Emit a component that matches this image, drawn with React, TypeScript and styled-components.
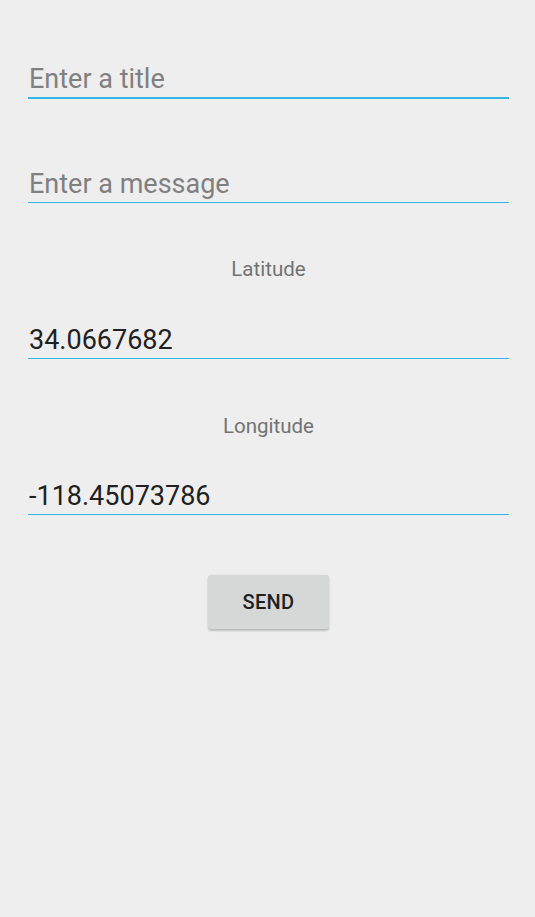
import React from "react";
import styled, { createGlobalStyle } from "styled-components";

const GlobalStyle = createGlobalStyle`
  html, body {
    margin: 0;
    padding: 0;
    background: #eeeeee;
  }
  #root {
    min-height: 100vh;
  }
`;

const Screen = styled.div`
  min-height: 100vh;
  background: #eeeeee;
  box-sizing: border-box;
  padding: 0 26px 0 28px;
  font-family: Roboto, "Liberation Sans", sans-serif;
`;

const Form = styled.form`
  display: flex;
  flex-direction: column;
  width: 481px;
  padding-top: 63px;
`;

const TextField = styled.input<{ $gap: number; $focused?: boolean }>`
  display: block;
  box-sizing: content-box;
  height: 30px;
  margin: ${(p) => p.$gap}px 0 0;
  padding: 1px 0 3px 1px;
  width: 480px;
  border: none;
  border-bottom: ${(p) => (p.$focused ? 2 : 1)}px solid #33b5e5;
  border-radius: 0;
  background: transparent;
  outline: none;
  font-family: Roboto, "Liberation Sans", sans-serif;
  font-size: 27px;
  line-height: 30px;
  color: #212121;
  &::placeholder {
    color: #808080;
    opacity: 1;
  }
`;

const FieldLabel = styled.div<{ $gap: number }>`
  margin-top: ${(p) => p.$gap}px;
  text-align: center;
  font-size: 20.5px;
  line-height: 24px;
  color: #737373;
`;

const SendButton = styled.button`
  align-self: center;
  margin-top: 60px;
  width: 121px;
  height: 54px;
  border: none;
  border-radius: 3px;
  background: #d6d7d7;
  box-shadow: 0 2px 2px rgba(0, 0, 0, 0.2), 0 0 1px rgba(0, 0, 0, 0.12);
  font-family: Roboto, "Liberation Sans", sans-serif;
  font-weight: 500;
  font-size: 20px;
  letter-spacing: 0.3px;
  color: #1f1f1f;
  padding: 0;
  cursor: pointer;
`;

export default function App() {
  return (
    <>
      <GlobalStyle />
      <Screen>
        <Form onSubmit={(e) => e.preventDefault()}>
          <TextField $gap={0} $focused placeholder="Enter a title" />
          <TextField $gap={69} placeholder="Enter a message" />
          <FieldLabel $gap={54}>Latitude</FieldLabel>
          <TextField $gap={43} defaultValue="34.0667682" />
          <FieldLabel $gap={55}>Longitude</FieldLabel>
          <TextField $gap={42} defaultValue="-118.45073786" />
          <SendButton type="submit">SEND</SendButton>
        </Form>
      </Screen>
    </>
  );
}
